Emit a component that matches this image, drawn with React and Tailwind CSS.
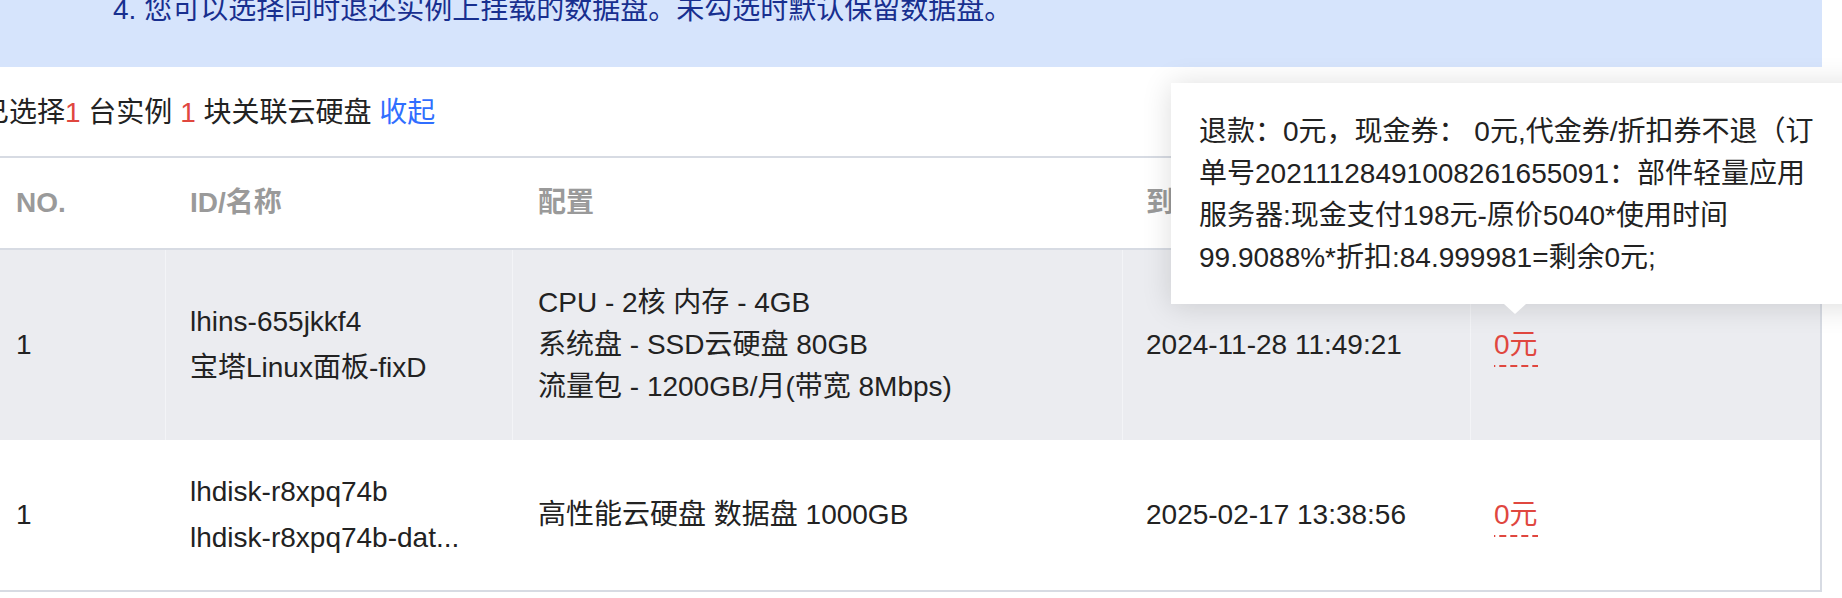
import React from 'react'

const rows = [
  {
    no: '1',
    ids: ['lhins-655jkkf4', '宝塔Linux面板-fixD'],
    config: ['CPU - 2核 内存 - 4GB', '系统盘 - SSD云硬盘 80GB', '流量包 - 1200GB/月(带宽 8Mbps)'],
    expire: '2024-11-28 11:49:21',
    active: true,
  },
  {
    no: '1',
    ids: ['lhdisk-r8xpq74b', 'lhdisk-r8xpq74b-dat...'],
    config: ['高性能云硬盘 数据盘 1000GB'],
    expire: '2025-02-17 13:38:56',
    active: false,
  },
]

const tipLines = [
  '退款：0元，现金券： 0元,代金券/折扣券不退（订',
  '单号20211128491008261655091：部件轻量应用',
  '服务器:现金支付198元-原价5040*使用时间',
  '99.9088%*折扣:84.999981=剩余0元;',
]

const cols = 'grid grid-cols-[166px_347px_610px_348px_1fr]'

const Refund = () => (
  <span className="inline-block leading-[30px] pb-[7px] text-[#e0473f] bg-[linear-gradient(to_right,#e0473f_62%,transparent_62%)] bg-[length:11px_2px] bg-repeat-x bg-bottom">
    0元
  </span>
)

const App = () => {
  return (
    <div className="relative w-[1842px] h-[598px] overflow-hidden bg-white text-[#222] font-['Liberation_Sans','Noto_Sans_CJK_SC',sans-serif]">
      <div className="w-[1822px]">
        <div className="h-[67px] bg-[#d6e4fc] pl-[113px]">
          <p className="text-[28px] leading-[20px] text-[#182f8f] whitespace-nowrap">
            4. 您可以选择同时退还实例上挂载的数据盘。未勾选时默认保留数据盘。
          </p>
        </div>

        <div className="h-[89px] flex items-center">
          <p className="ml-[-19px] mt-[3px] text-[28px] leading-[40px] whitespace-nowrap">
            已选择<span className="text-[#e0473f]">1</span> 台实例 <span className="text-[#e0473f]">1</span> 块关联云硬盘{' '}
            <span className="text-[#306eff] cursor-pointer">收起</span>
          </p>
        </div>

        <div className="border-t-2 border-r-2 border-b-2 border-[#d7dbe3] text-[28px]">
          <div className={`${cols} h-[92px] border-b-2 border-[#d7dbe3] items-center font-semibold text-[#9a9a9a]`}>
            <div className="pl-[16px]">NO.</div>
            <div className="pl-[24px]">ID/名称</div>
            <div className="pl-[25px]">配置</div>
            <div className="pl-[23px]">到期时间</div>
            <div className="pl-[23px]">退款金额</div>
          </div>

          {rows.map((r, i) => {
            const sep = r.active ? 'border-r border-[#f3f4f7]' : 'border-r border-white'
            return (
              <div
                key={i}
                className={`${cols} ${r.active ? 'h-[190px] bg-[#ebecf0]' : 'h-[150px] bg-white'}`}
              >
                <div className={`flex items-center pl-[16px] ${sep}`}>{r.no}</div>
                <div className={`flex flex-col justify-center gap-[4px] pl-[24px] leading-[42px] ${sep}`}>
                  {r.ids.map((t) => (
                    <div key={t} className="whitespace-nowrap">{t}</div>
                  ))}
                </div>
                <div className={`flex flex-col justify-center pl-[25px] leading-[42px] ${sep}`}>
                  {r.config.map((t) => (
                    <div key={t} className="whitespace-nowrap">{t}</div>
                  ))}
                </div>
                <div className={`flex items-center pl-[23px] ${sep}`}>{r.expire}</div>
                <div className="flex items-center pl-[23px] pt-[6px]">
                  <Refund />
                </div>
              </div>
            )
          })}
        </div>
      </div>

      <div className="absolute left-[1171px] top-[83px] z-10 w-[720px] bg-white pl-[28px] pt-[28px] pb-[25px] text-[28px] leading-[42px] text-[#222] shadow-[0_2px_28px_rgba(0,0,0,0.14)]">
        {tipLines.map((t) => (
          <div key={t} className="whitespace-nowrap">{t}</div>
        ))}
        <div className="absolute left-[333px] top-full w-0 h-0 border-l-[11px] border-r-[11px] border-t-[10px] border-l-transparent border-r-transparent border-t-white" />
      </div>
    </div>
  )
}

export default App
